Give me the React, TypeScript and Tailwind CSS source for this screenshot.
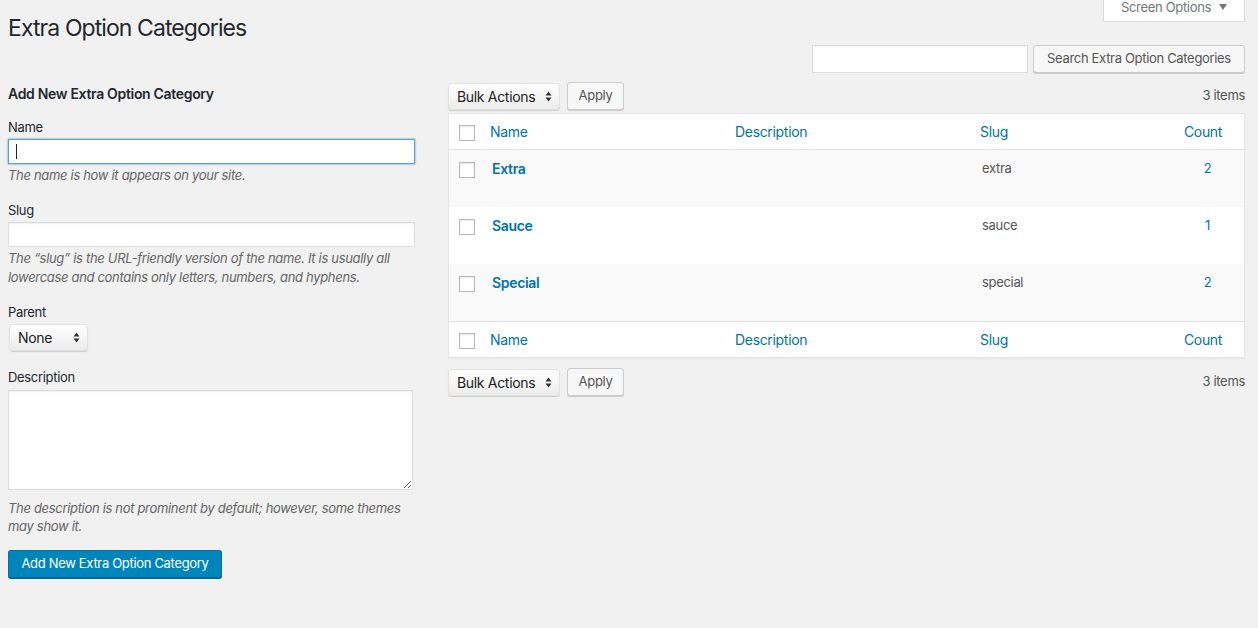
import React from "react";

type Row = { name: string; slug: string; count: number };

const rows: Row[] = [
  { name: "Extra", slug: "extra", count: 2 },
  { name: "Sauce", slug: "sauce", count: 1 },
  { name: "Special", slug: "special", count: 2 },
];

const Check = () => (
  <span className="block w-4 h-4 bg-white border border-[#b4b9be] shadow-[inset_0_1px_2px_rgba(0,0,0,0.1)]" />
);

const Arrows = () => (
  <svg width="7" height="11" viewBox="0 0 7 11" className="shrink-0">
    <path d="M3.5 0.5 L6.5 4.5 L0.5 4.5 Z" fill="#333" />
    <path d="M3.5 10.5 L6.5 6.5 L0.5 6.5 Z" fill="#333" />
  </svg>
);

const Select = ({ label, w }: { label: string; w: string }) => (
  <div
    className={`${w} h-[27px] flex items-center justify-between pl-[8px] pr-[7px] rounded-[4px] bg-gradient-to-b from-[#ffffff] to-[#ececec] border border-[#e2e2e2] shadow-[0_1px_1px_rgba(0,0,0,0.15)] text-[14px] text-[#222] whitespace-nowrap`}
  >
    <span>{label}</span>
    <Arrows />
  </div>
);

const Btn = ({ children, cls }: { children: React.ReactNode; cls?: string }) => (
  <button
    className={`h-[28px] px-[10px] rounded-[3px] bg-[#f7f7f7] border border-[#cccccc] shadow-[0_1px_0_#cccccc] text-[13px] text-[#555] whitespace-nowrap ${cls ?? ""}`}
  >
    {children}
  </button>
);

const TableNav = () => (
  <div className="flex items-center h-[28px]">
    <Select label="Bulk Actions" w="w-[112px]" />
    <Btn cls="ml-[7px] w-[57px]">Apply</Btn>
    <span className="ml-auto text-[13px] text-[#555]">3 items</span>
  </div>
);

const HeadRow = ({ top }: { top?: boolean }) => (
  <div
    className={`flex items-center h-[36px] bg-white text-[14px] text-[#0073aa] ${
      top ? "border-b border-[#e1e1e1]" : "border-t border-[#e1e1e1]"
    }`}
  >
    <div className="w-[41px] pl-[10px] pt-[3px]">
      <Check />
    </div>
    <div className="w-[245px]">Name</div>
    <div className="w-[245px]">Description</div>
    <div className="w-[191px]">Slug</div>
    <div className="flex-1 text-center pr-[9px]">Count</div>
  </div>
);

const App = () => {
  return (
    <div className="min-h-[628px] bg-[#f1f1f1] pl-2 pr-[13px] font-['Inter','Liberation_Sans',sans-serif] tracking-[-0.02em] text-[#23282d]">
      <div className="flex justify-between items-start h-[45px]">
        <h1 className="pt-[14px] text-[23px] leading-[29px] font-normal tracking-[-0.04em]">Extra Option Categories</h1>
        <div className="h-[22px] w-[142px] flex items-start justify-center gap-[8px] bg-white border border-t-0 border-[#dddddd] text-[13px] leading-[15px] text-[#72777c]">
          <span>Screen Options</span>
          <svg width="8" height="6" viewBox="0 0 8 6" className="mt-[4px]">
            <path d="M0 0 H8 L4 6 Z" fill="#72777c" />
          </svg>
        </div>
      </div>

      <div className="flex gap-[32px]">
        {/* left column */}
        <div className="w-[408px] shrink-0">
          <h2 className="mt-[40px] text-[14px] leading-[18px] font-semibold">Add New Extra Option Category</h2>

          <label className="block mt-[15px] text-[13px] leading-[18px] mb-[3px]">Name</label>
          <div className="w-[407px] h-[25px] bg-white border border-[#5b9dd9] shadow-[0_0_2px_rgba(30,140,190,0.8)] flex items-center pl-[7px]">
            <span className="block w-px h-[15px] bg-[#222]" />
          </div>
          <p className="mt-[2px] text-[13px] leading-[19px] italic text-[#666]">The name is how it appears on your site.</p>

          <label className="block mt-[16px] text-[13px] leading-[18px] mb-[3px]">Slug</label>
          <input
            readOnly
            className="block w-[407px] h-[25px] bg-white border border-[#dddddd] shadow-[inset_0_1px_2px_rgba(0,0,0,0.07)] outline-none"
          />
          <p className="mt-[2px] text-[13px] leading-[19px] italic text-[#666]">
            The “slug” is the URL-friendly version of the name. It is usually all lowercase and contains only letters,
            numbers, and hyphens.
          </p>

          <label className="block mt-[16px] text-[13px] leading-[18px] mb-[3px]">Parent</label>
          <div className="ml-px">
            <Select label="None" w="w-[79px]" />
          </div>

          <label className="block mt-[17px] text-[13px] leading-[18px] mb-[4px]">Description</label>
          <textarea
            readOnly
            className="block w-[405px] h-[100px] bg-white border border-[#dddddd] shadow-[inset_0_1px_2px_rgba(0,0,0,0.07)] outline-none"
          />
          <p className="mt-[9px] text-[13px] leading-[18px] italic text-[#666]">
            The description is not prominent by default; however, some themes may show it.
          </p>

          <button className="mt-[15px] h-[28px] w-[214px] rounded-[3px] bg-[#0085ba] border border-[#0073aa] border-b-[#006799] shadow-[0_1px_0_#006799] text-[13px] text-white whitespace-nowrap">
            Add New Extra Option Category
          </button>
        </div>

        {/* right column */}
        <div className="flex-1">
          <div className="flex justify-end gap-[5px]">
            <input
              readOnly
              className="w-[216px] h-[28px] bg-white border border-[#dddddd] shadow-[inset_0_1px_2px_rgba(0,0,0,0.07)] outline-none"
            />
            <Btn cls="w-[212px]">Search Extra Option Categories</Btn>
          </div>

          <div className="mt-[9px]">
            <TableNav />
          </div>

          <div className="mt-[3px] border border-[#e5e5e5] shadow-[0_1px_1px_rgba(0,0,0,0.04)]">
            <HeadRow top />
            {rows.map((r, i) => (
              <div key={r.name} className={`flex items-start h-[57px] ${i % 2 === 0 ? "bg-[#f9f9f9]" : "bg-white"}`}>
                <div className="w-[41px] pl-[10px] pt-[12px]">
                  <Check />
                </div>
                <div className="w-[245px] pl-[2px] pt-[9px] text-[14px] leading-[19px] font-semibold text-[#0073aa]">
                  {r.name}
                </div>
                <div className="w-[245px]" />
                <div className="w-[191px] pl-[2px] pt-[9px] text-[13px] leading-[19px] text-[#555]">{r.slug}</div>
                <div className="flex-1 text-center pt-[9px] text-[13px] leading-[19px] text-[#0073aa]">{r.count}</div>
              </div>
            ))}
            <HeadRow />
          </div>

          <div className="mt-[10px]">
            <TableNav />
          </div>
        </div>
      </div>
    </div>
  );
};

export default App;
